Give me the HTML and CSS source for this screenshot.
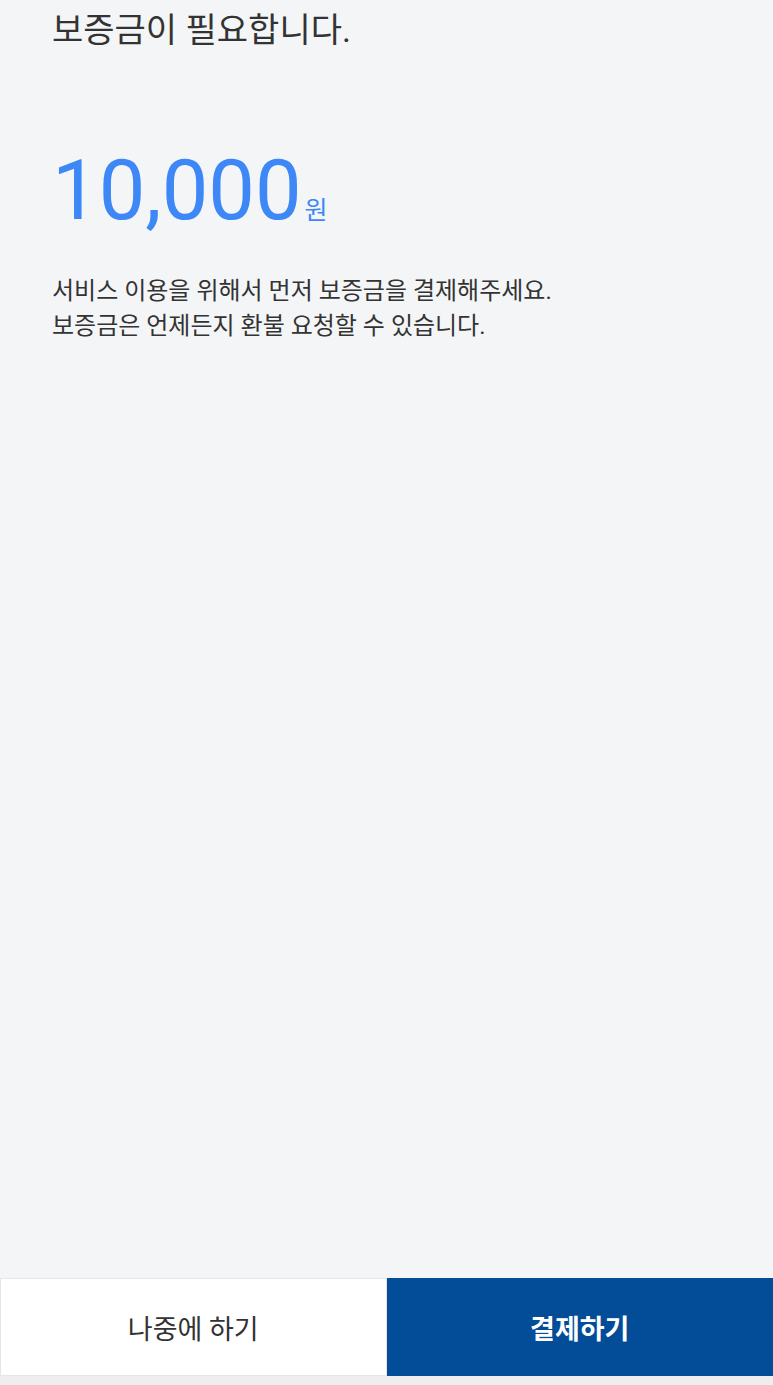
FILE: index.html
```html
<!DOCTYPE html>
<html lang="ko">
<head>
    <meta charset="UTF-8" />
    <title>보증금 결제</title>
    <link rel="stylesheet" href="styles.css">
</head>
<body>
    <main class="content">
        <h1 class="title">보증금이 필요합니다.</h1>

        <div class="amount">
            <span class="amount-value">10,000</span>
            <span class="amount-unit">원</span>
        </div>

        <p class="desc">
            서비스 이용을 위해서 먼저 보증금을 결제해주세요.<br>
            보증금은 언제든지 환불 요청할 수 있습니다.
        </p>
    </main>

    <footer class="actions">
        <button type="button" class="btn later">나중에 하기</button>
        <button type="button" class="btn pay">결제하기</button>
    </footer>
</body>
</html>
```

FILE: styles.css
```css
html, body {
    height: 100%;
}

body {
    font-family: Roboto, "Noto Sans CJK KR", sans-serif;
    background: #f4f5f7;
    margin: 0;
    padding: 0;
    color: #333;
    display: flex;
    flex-direction: column;
}

.content {
    flex: 1;
    padding: 0 52px;
}

.title {
    font-size: 34px;
    font-weight: normal;
    line-height: 42px;
    margin: 9px 0 0;
    color: #333;
}

.amount {
    margin-top: 95px;
    display: flex;
    align-items: baseline;
    color: #3d88f6;
}

.amount-value {
    font-size: 83px;
    line-height: 90px;
}

.amount-unit {
    font-size: 25px;
    margin-left: 3px;
}

.desc {
    font-size: 24px;
    line-height: 35px;
    margin: 38px 0 0;
    color: #333;
}

.actions {
    display: flex;
    padding-bottom: 9px;
    background: #eeeeee;
}

.btn {
    width: 50%;
    flex: none;
    box-sizing: border-box;
    height: 98px;
    border: none;
    font-family: Roboto, "Noto Sans CJK KR", sans-serif;
    font-size: 27px;
    cursor: pointer;
}

.btn.later {
    background: #fff;
    color: #333;
    border: 1px solid #e6e6e6;
}

.btn.pay {
    background: #024c98;
    color: #fff;
    font-weight: bold;
}
```
